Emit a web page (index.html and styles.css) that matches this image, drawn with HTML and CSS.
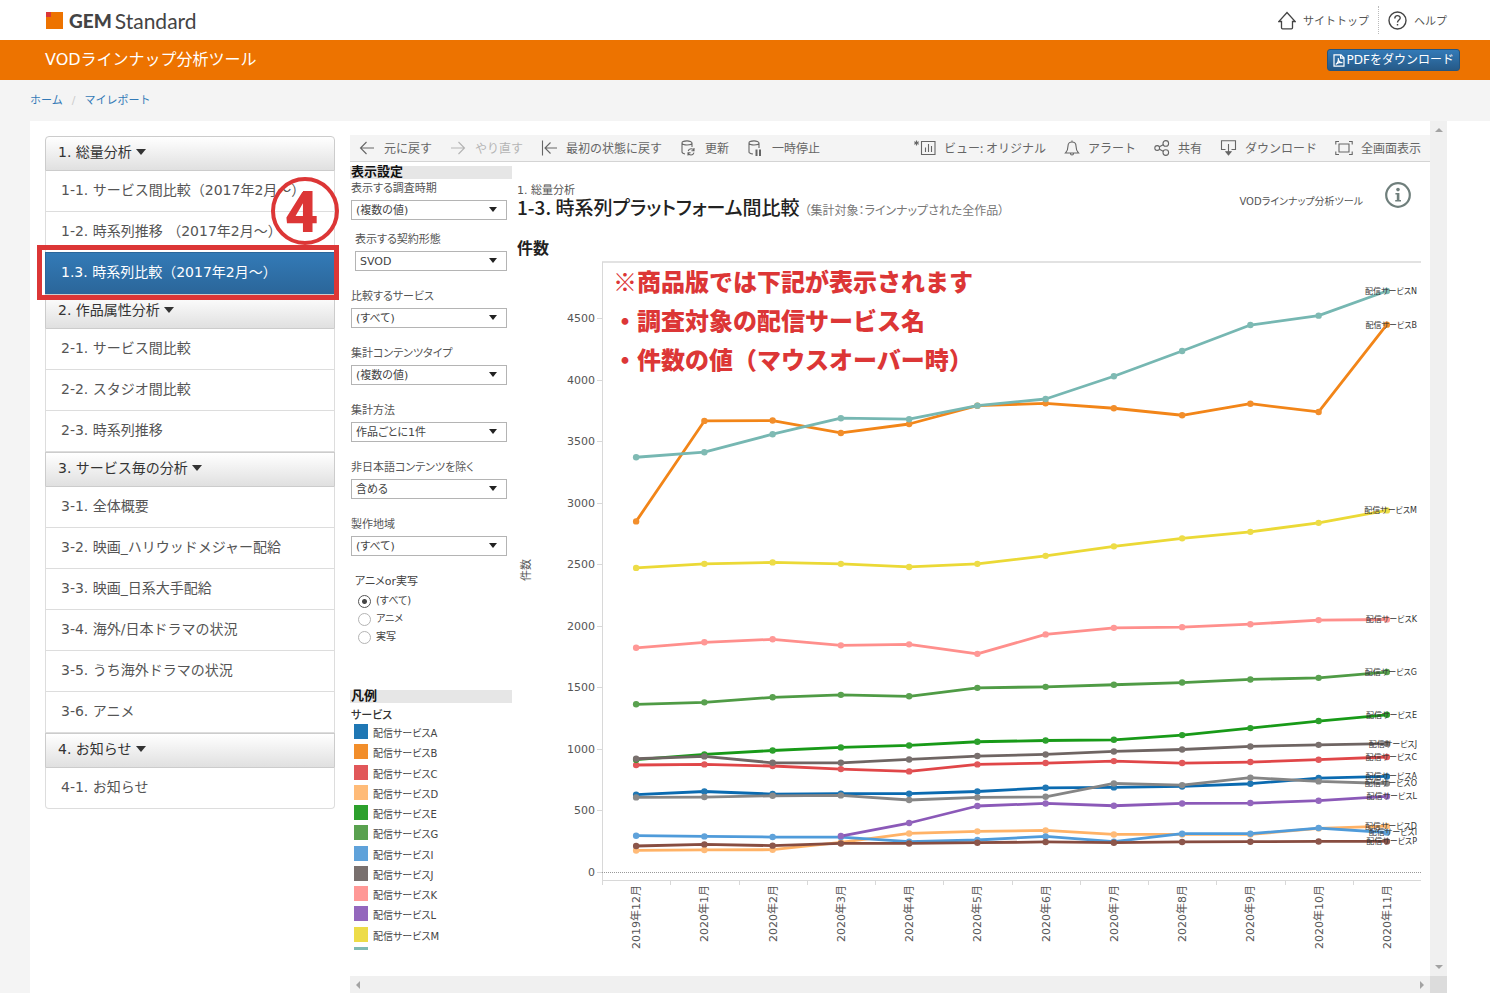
FILE: index.html
```html
<!DOCTYPE html>
<html lang="ja">
<head>
    <meta charset="UTF-8">
    <meta name="viewport" content="width=device-width, initial-scale=1.0">
    <title>VODラインナップ分析ツール</title>
    <link rel="stylesheet" href="styles.css">
</head>
<body>

    <div class="header">
        <a class="logo" href="#">
            <svg width="17" height="17" viewBox="0 0 17 17"><rect width="17" height="17" fill="#ed7300"/><rect width="5" height="5" fill="#dc3636"/></svg>
            <strong>GEM</strong><span>Standard</span>
        </a>
        <div class="header-links">
            <a href="#">
                <svg width="18" height="19" viewBox="0 0 18 19" fill="none" stroke="#444" stroke-width="1.3"><path d="M3.5 10.5 H0.8 L9 1.5 L17.2 10.5 H14.5 V16.8 Q14.5 17.8 13.5 17.8 H4.5 Q3.5 17.8 3.5 16.8 Z"/></svg>
                サイトトップ
            </a>
            <a href="#">
                <svg width="19" height="19" viewBox="0 0 19 19" fill="none" stroke="#444" stroke-width="1.4"><circle cx="9.5" cy="9.5" r="8.5"/><path d="M6.8 7.4 C6.8 3.8 12.2 3.8 12.2 7 C12.2 9.2 9.5 9 9.5 11.6 M9.5 13 V14.6"/></svg>
                ヘルプ
            </a>
        </div>
    </div>

    <div class="titlebar">
        <h1>VODラインナップ分析ツール</h1>
        <button class="btn-pdf" type="button">
            <svg width="12" height="13" viewBox="0 0 12 13" fill="none" stroke="#fff" stroke-width="1.2"><path d="M1 0.8 H8 L11 3.8 V12.2 H1 Z M7.6 1 V4.2 H11"/><path d="M2.8 10.4 C5 8.8 5.8 6.5 5.2 4.2 C5.6 7.4 7 8.8 9.4 8.6 C7 8 4.6 8.8 2.8 10.4"/></svg>
            PDFをダウンロード
        </button>
    </div>

    <div class="breadcrumb">
        <a href="#">ホーム</a><span>/</span><a href="#">マイレポート</a>
    </div>

    <div class="main">
        <div class="sidebar">
            <div class="menu-group">
                <a class="menu-title" href="#">1. 総量分析 <i class="caret"></i></a>
                <a class="menu-item" href="#">1-1. サービス間比較（2017年2月～）</a>
                <a class="menu-item" href="#">1-2. 時系列推移 （2017年2月～）</a>
                <a class="menu-item active" href="#">1.3. 時系列比較（2017年2月～）</a>
                <div class="step-box"></div>
                <div class="step-number">4</div>
            </div>
            <div class="menu-group">
                <a class="menu-title" href="#">2. 作品属性分析 <i class="caret"></i></a>
                <a class="menu-item" href="#">2-1. サービス間比較</a>
                <a class="menu-item" href="#">2-2. スタジオ間比較</a>
                <a class="menu-item" href="#">2-3. 時系列推移</a>
            </div>
            <div class="menu-group">
                <a class="menu-title" href="#">3. サービス毎の分析 <i class="caret"></i></a>
                <a class="menu-item" href="#">3-1. 全体概要</a>
                <a class="menu-item" href="#">3-2. 映画_ハリウッドメジャー配給</a>
                <a class="menu-item" href="#">3-3. 映画_日系大手配給</a>
                <a class="menu-item" href="#">3-4. 海外/日本ドラマの状況</a>
                <a class="menu-item" href="#">3-5. うち海外ドラマの状況</a>
                <a class="menu-item" href="#">3-6. アニメ</a>
            </div>
            <div class="menu-group">
                <a class="menu-title" href="#">4. お知らせ <i class="caret"></i></a>
                <a class="menu-item" href="#">4-1. お知らせ</a>
            </div>
        </div>

        <div class="frame">
            <div class="report">
                <div class="toolbar">
                    <div class="tools">
                        <button type="button"><svg width="16" height="16" viewBox="0 0 16 16"><path d="M15 8 H1.5 M7.5 2 L1.5 8 L7.5 14"/></svg>元に戻す</button>
                        <button type="button" disabled><svg width="16" height="16" viewBox="0 0 16 16"><path d="M1 8 H14.5 M8.5 2 L14.5 8 L8.5 14"/></svg>やり直す</button>
                        <button type="button"><svg width="16" height="16" viewBox="0 0 16 16"><path d="M1.5 0.5 V15.5 M16 8 H4 M9.5 2.5 L4 8 L9.5 13.5"/></svg>最初の状態に戻す</button>
                        <button type="button"><svg width="16" height="16" viewBox="0 0 16 16"><path d="M5 14 C3 13.6 2 13 2 12 V3 C2 0.2 12 0.2 12 3 C12 5.6 2 5.6 2 3 M12 3 V7"/><path d="M8.2 11 C9 8 13 8 13.8 10.5 M14 8 V10.8 H11.4 M14 12.6 C13 15.8 9 15.6 8.2 13 M8 15.6 V12.8 H10.6"/></svg>更新</button>
                        <button type="button"><svg width="16" height="16" viewBox="0 0 16 16"><path d="M6 14 C3 13.6 2 13 2 12 V3 C2 0.2 12 0.2 12 3 C12 5.6 2 5.6 2 3 M12 3 V8"/><path d="M9.5 9.5 V16 M13 9.5 V16" stroke-width="2"/></svg>一時停止</button>
                    </div>
                    <div class="tools">
                        <button type="button"><svg width="22" height="16" viewBox="0 0 22 16"><path d="M7.5 1.5 H21 V14.5 H7.5 Z M11.5 12 V7.5 M14.5 12 V4 M17.5 12 V6"/><path d="M2.5 0.5 V5.5 M0.3 1.8 L4.7 4.2 M4.7 1.8 L0.3 4.2"/></svg>ビュー: オリジナル</button>
                        <button type="button"><svg width="16" height="16" viewBox="0 0 16 16"><path d="M1.5 13 C3.5 11 4 9 4 6 C4 3 6 2 8 2 C10 2 12 3 12 6 C12 9 12.5 11 14.5 13 Z M8 0.5 V2 M6.5 13.5 C6.5 15.5 9.5 15.5 9.5 13.5"/></svg>アラート</button>
                        <button type="button"><svg width="16" height="16" viewBox="0 0 16 16"><circle cx="3.2" cy="8" r="2.4"/><circle cx="11.8" cy="3.4" r="2.8"/><circle cx="11.8" cy="12.6" r="2.8"/><path d="M5.4 6.8 L9.2 4.8 M5.4 9.2 L9.2 11.2"/></svg>共有</button>
                        <button type="button"><svg width="17" height="16" viewBox="0 0 17 16"><path d="M5.5 9.5 H1.5 V0.8 H15.5 V9.5 H11.5 M8.5 4 V14.5"/><path d="M6 11.8 L8.5 14.8 L11 11.8 Z" fill="#666"/></svg>ダウンロード</button>
                        <button type="button"><svg width="18" height="16" viewBox="0 0 18 16"><path d="M4 4 H14 V12 H4 Z M0.8 4.5 V1.5 H4 M14 1.5 H17.2 V4.5 M17.2 11.5 V14.5 H14 M4 14.5 H0.8 V11.5"/></svg>全画面表示</button>
                    </div>
                </div>

                <div class="dashboard">
                    <div class="filters">
                        <h2>表示設定</h2>
                        <div class="field first">
                            <label for="period">表示する調査時期</label>
                            <div class="select"><select id="period"><option>(複数の値)</option></select></div>
                        </div>
                        <div class="field indent">
                            <label for="contract">表示する契約形態</label>
                            <div class="select"><select id="contract"><option>SVOD</option></select></div>
                        </div>
                        <div class="field">
                            <label for="service">比較するサービス</label>
                            <div class="select"><select id="service"><option>(すべて)</option></select></div>
                        </div>
                        <div class="field">
                            <label for="content">集計コンテンツタイプ</label>
                            <div class="select"><select id="content"><option>(複数の値)</option></select></div>
                        </div>
                        <div class="field">
                            <label for="method">集計方法</label>
                            <div class="select"><select id="method"><option>作品ごとに1件</option></select></div>
                        </div>
                        <div class="field">
                            <label for="foreign">非日本語コンテンツを除く</label>
                            <div class="select"><select id="foreign"><option>含める</option></select></div>
                        </div>
                        <div class="field">
                            <label for="region">製作地域</label>
                            <div class="select"><select id="region"><option>(すべて)</option></select></div>
                        </div>
                        <div class="radios" role="radiogroup" aria-labelledby="kind">
                            <div id="kind">アニメor実写</div>
                            <label><input type="radio" name="kind" checked>(すべて)</label>
                            <label><input type="radio" name="kind">アニメ</label>
                            <label><input type="radio" name="kind">実写</label>
                        </div>

                        <h2>凡例</h2>
                        <h3>サービス</h3>
                        <div class="legend">
                            <!-- filled by chart.js -->
                            <ul id="legend"></ul>
                        </div>
                    </div>

                    <div class="content">
                        <div class="content-header">
                            <div class="content-title">
                                <p>1. 総量分析</p>
                                <h2>1-3. 時系列プラットフォーム間比較<small>（集計対象：ラインナップされた全作品）</small></h2>
                            </div>
                            <div class="content-info">
                                <span>VODラインナップ分析ツール</span>
                                <svg width="26" height="26" viewBox="0 0 26 26"><circle cx="13" cy="13" r="11.8" fill="none" stroke="#6f7f7c" stroke-width="2.2"/><circle cx="13" cy="7.6" r="1.8" fill="#6f7f7c"/><path d="M10.4 11 H14.4 V18 H16 V19.4 H10.2 V18 H11.8 V12.4 H10.4 Z" fill="#6f7f7c"/></svg>
                            </div>
                        </div>
                        <h3>件数</h3>
                        <div class="chart">
                            <svg id="chart"></svg>
                            <div class="note">
                                <p>※商品版では下記が表示されます</p>
                                <p>・調査対象の配信サービス名</p>
                                <p>・件数の値（マウスオーバー時）</p>
                            </div>
                        </div>
                    </div>
                </div>
            </div>
            <div class="scroll-v"><i class="up"></i><i class="down"></i></div>
            <div class="scroll-h"><i class="left"></i><i class="right"></i></div>
            <div class="scroll-corner"></div>
        </div>
    </div>

    <script src="chart.js"></script>
</body>
</html>
```

FILE: styles.css
```css
* {
    box-sizing: border-box;
}
body {
    font-family: "DejaVu Sans", "Noto Sans CJK JP", sans-serif;
    font-size: 14px;
    margin: 0;
    background-color: #f4f4f4;
    color: #333;
}
h1, h2, h3, p, ul {
    margin: 0;
    padding: 0;
}
a {
    text-decoration: none;
}
svg {
    display: block;
    flex: none;
}

/* header */
.header {
    display: flex;
    justify-content: space-between;
    align-items: center;
    height: 40px;
    padding: 0 43px 0 46px;
    background: #fff;
}
.logo {
    display: flex;
    align-items: center;
    color: #444;
    font-family: Lato, sans-serif;
    font-size: 21px;
    line-height: 24px;
}
.logo strong {
    margin: 2px 3px 0 6px;
    font-size: 19px;
    font-weight: 900;
}
.logo span {
    margin-top: 2px;
    font-weight: 400;
}
.header-links {
    display: flex;
    align-items: center;
    height: 28px;
}
.header-links a {
    display: flex;
    align-items: center;
    gap: 7px;
    height: 28px;
    color: #555;
    font-size: 11px;
}
.header-links a + a {
    margin-left: 9px;
    padding-left: 9px;
    border-left: 1px dotted #bbb;
}
.titlebar {
    display: flex;
    justify-content: space-between;
    align-items: center;
    height: 40px;
    padding: 0 30px 0 45px;
    background: #ed7300;
}
.titlebar h1 {
    color: #fff;
    font-size: 16px;
    font-weight: normal;
    line-height: 38px;
}
.btn-pdf {
    display: flex;
    align-items: center;
    gap: 2px;
    height: 22px;
    padding: 0 5px;
    border: 1px solid #245580;
    border-radius: 3px;
    background: linear-gradient(#337ab7, #265a88);
    color: #fff;
    font-family: inherit;
    font-size: 12px;
    line-height: 18px;
}
.breadcrumb {
    padding: 1px 30px 0;
    color: #ccc;
    font-size: 11px;
    line-height: 40px;
}
.breadcrumb a {
    color: #337ab7;
}
.breadcrumb span {
    padding: 0 9px;
}

/* layout */
.main {
    display: flex;
    align-items: stretch;
    gap: 15px;
    margin-left: 30px;
    padding: 0 43px 0 15px;
    background: #fff;
}
.sidebar {
    flex: none;
    width: 290px;
    padding-top: 15px;
}
.menu-group {
    position: relative;
}
.menu-title {
    display: block;
    height: 35px;
    padding: 0 12px;
    border: 1px solid #ccc;
    border-radius: 4px 4px 0 0;
    background: linear-gradient(#fff, #e0e0e0);
    color: #333;
    line-height: 30px;
}
.menu-group + .menu-group .menu-title {
    border-radius: 0;
}
.caret {
    display: inline-block;
    border: 5px solid transparent;
    border-top: 6px solid #333;
    border-bottom: 0;
    vertical-align: 2px;
}
.menu-item {
    display: block;
    height: 42px;
    margin-top: -1px;
    padding: 0 15px;
    border: 1px solid #ddd;
    background: #fff;
    color: #555;
    line-height: 38px;
    white-space: nowrap;
}
.menu-title + .menu-item {
    border-top-color: #ccc;
}
.menu-group:last-child .menu-item:last-child {
    border-radius: 0 0 4px 4px;
}
.menu-item.active {
    border-color: #2b669a;
    background: linear-gradient(#337ab7, #2b669a);
    color: #fff;
}

/* red callout over the active item */
.step-box {
    position: absolute;
    z-index: 1;
    left: -8px;
    right: -4px;
    bottom: -6px;
    height: 55px;
    border: 5px solid #dc3636;
}
.step-number {
    position: absolute;
    z-index: 1;
    right: -4px;
    top: 41px;
    width: 68px;
    height: 68px;
    padding-right: 7px;
    border: 4px solid #dc3636;
    border-radius: 50%;
    color: #dc3636;
    font-family: Roboto, sans-serif;
    font-size: 58px;
    font-weight: 900;
    line-height: 62px;
    text-align: center;
}

/* embedded report */
.frame {
    flex: 1;
    display: grid;
    grid-template-columns: 1fr 17px;
    grid-template-rows: 1fr 17px;
    min-width: 0;
}
.report {
    min-width: 0;
    padding: 14px 0 26px;
    overflow: hidden;
    font-feature-settings: "palt";
}
.scroll-v, .scroll-h {
    display: flex;
    justify-content: space-between;
    align-items: center;
    background: #f0f0f0;
}
.scroll-v {
    flex-direction: column;
    padding: 7px 0;
}
.scroll-h {
    padding: 0 6px;
}
.scroll-corner {
    background: #dcdcdc;
}
.scroll-v i, .scroll-h i {
    border: 4px solid transparent;
}
.scroll-v .up {
    border-top: 0;
    border-bottom-color: #a3a3a3;
}
.scroll-v .down {
    border-bottom: 0;
    border-top-color: #a3a3a3;
}
.scroll-h .left {
    border-left: 0;
    border-right-color: #a3a3a3;
}
.scroll-h .right {
    border-right: 0;
    border-left-color: #a3a3a3;
}
.toolbar {
    display: flex;
    justify-content: space-between;
    height: 27px;
    padding: 0 9px;
    border-bottom: 1px solid #d4d4d4;
    background: #f4f4f4;
    font-feature-settings: normal;
}
.tools {
    display: flex;
    gap: 18px;
}
.toolbar button {
    display: flex;
    align-items: center;
    gap: 8px;
    padding: 0 0 1px;
    border: 0;
    background: none;
    color: #666;
    font-family: "Noto Sans CJK JP", sans-serif;
    font-size: 12px;
    white-space: nowrap;
}
.tools:first-child button {
    gap: 9px;
}
.toolbar svg {
    fill: none;
    stroke: #666;
    stroke-width: 1.1;
}
.toolbar button:disabled {
    color: #b4b4b4;
}
.toolbar button:disabled svg {
    stroke: #b4b4b4;
}
.dashboard {
    display: flex;
    gap: 5px;
    padding: 0 9px 0 0;
}

/* filters */
.filters {
    flex: none;
    width: 162px;
    padding-top: 4px;
    font-size: 11px;
}
.filters h2 {
    height: 13px;
    padding-left: 1px;
    background: #e6e6e6;
    color: #111;
    font-size: 13px;
    line-height: 12px;
}
.filters h3 {
    margin: 5px 0 0 1px;
    font-size: 11px;
    font-weight: 500;
    line-height: 16px;
}
.field {
    margin: 17px 5px 0 1px;
}
.field.first {
    margin-top: 1px;
}
.field.indent {
    margin-top: 11px;
    padding-left: 4px;
}
.field label {
    display: block;
    height: 20px;
    color: #555;
    line-height: 18px;
    white-space: nowrap;
}
.select {
    position: relative;
}
.select::after {
    content: "";
    position: absolute;
    right: 10px;
    top: 7px;
    border: 4px solid transparent;
    border-top: 5px solid #222;
    border-bottom: 0;
    pointer-events: none;
}
.select select {
    display: block;
    width: 100%;
    height: 20px;
    padding: 0 4px;
    border: 1px solid #b4b4b4;
    border-radius: 0;
    background: #fff;
    color: #444;
    font: inherit;
    font-feature-settings: inherit;
    appearance: none;
}
.radios {
    margin: 17px 0 44px 5px;
    color: #444;
    line-height: 18px;
}
.radios div {
    margin-bottom: 1px;
}
.radios label {
    display: flex;
    align-items: center;
    gap: 5px;
    padding-left: 3px;
    font-size: 10px;
}
.radios input {
    width: 13px;
    height: 13px;
    margin: 0;
    border: 1px solid #b4b4b4;
    border-radius: 50%;
    background: #fff;
    appearance: none;
}
.radios input:checked {
    border-color: #555;
    background: radial-gradient(#444 2px, #fff 3px);
}
.legend {
    height: 226px;
    overflow: hidden;
}
.legend ul {
    display: grid;
    grid-template-rows: repeat(12, 1fr);
    height: 243px;
    margin-left: 4px;
    list-style: none;
}
.legend li {
    display: flex;
    gap: 5px;
    color: #444;
    font-size: 10px;
    line-height: 20px;
}
.legend i {
    width: 14px;
    height: 15px;
}

/* chart area */
.content {
    flex: 1;
    min-width: 0;
    color: #222;
}
.content-header {
    display: flex;
    justify-content: space-between;
    align-items: flex-start;
    height: 54px;
    padding-top: 20px;
}
.content-title {
    padding-top: 2px;
    white-space: nowrap;
}
.content-title p {
    color: #555;
    font-size: 11px;
    line-height: 14px;
}
.content-title h2 {
    font-family: "Noto Sans CJK JP", sans-serif;
    font-size: 19px;
    font-weight: 500;
    line-height: 18px;
}
.content-title small {
    margin-left: 5px;
    color: #777;
    font-size: 12px;
    font-weight: normal;
    line-height: 12px;
}
.content-info {
    display: flex;
    align-items: flex-end;
    gap: 22px;
    padding-right: 10px;
    color: #555;
    font-size: 10px;
    line-height: 12px;
}
.content h3 {
    margin-top: 23px;
    font-size: 16px;
    line-height: 20px;
}
.chart {
    position: relative;
}
.chart > svg {
    width: 100%;
    height: 691px;
}
.chart text {
    fill: #555;
    font-size: 11px;
    font-feature-settings: normal;
}
.chart .point-label {
    fill: #333;
    font-size: 8px;
    font-feature-settings: "palt";
}
.grid-line {
    stroke: #d8d8d8;
}
.top-line {
    stroke: #e2e2e2;
    stroke-width: 2;
}
.zero-line {
    stroke: #999;
    stroke-dasharray: 1 1;
}
.note {
    position: absolute;
    left: 96px;
    top: 2px;
    color: #dc3636;
    font-family: "Noto Sans CJK JP", sans-serif;
    font-feature-settings: normal;
    font-size: 24px;
    font-weight: 900;
    line-height: 39px;
    white-space: nowrap;
}
```

FILE: chart.js
```js
const months = ["2019年12月", "2020年1月", "2020年2月", "2020年3月", "2020年4月", "2020年5月", "2020年6月", "2020年7月", "2020年8月", "2020年9月", "2020年10月", "2020年11月"];

const services = [
    { name: "A", color: "#1f77b4", line: "#0a6ab0", data: [628, 654, 633, 636, 636, 654, 684, 687, 695, 717, 763, 776] },
    { name: "B", color: "#f28e2b", line: "#f28518", data: [2848, 3664, 3667, 3566, 3639, 3788, 3807, 3767, 3710, 3804, 3737, 4446] },
    { name: "C", color: "#e15759", line: "#e04648", data: [869, 874, 861, 836, 817, 874, 885, 901, 885, 893, 912, 934] },
    { name: "D", color: "#ffbb78", line: "#ffb266", data: [175, 179, 181, 240, 313, 330, 338, 305, 305, 305, 354, 373] },
    { name: "E", color: "#2ca02c", line: "#189a18", data: [912, 955, 987, 1012, 1028, 1058, 1068, 1074, 1112, 1169, 1226, 1277] },
    { name: "G", color: "#59a14f", line: "#4f9b45", data: [1362, 1378, 1419, 1439, 1427, 1496, 1504, 1521, 1539, 1564, 1577, 1624] },
    { name: "I", color: "#5fa2da", line: "#4f9bda", data: [295, 289, 284, 284, 246, 260, 289, 246, 311, 311, 357, 321] },
    { name: "J", color: "#79706e", line: "#6f6563", data: [920, 939, 887, 887, 914, 942, 955, 979, 995, 1020, 1033, 1042] },
    { name: "K", color: "#ff9896", line: "#ff8f8c", data: [1821, 1866, 1890, 1841, 1849, 1772, 1930, 1983, 1989, 2013, 2046, 2051] },
    { name: "L", color: "#9467bd", line: "#8b59b8", data: [null, null, null, 292, 398, 536, 557, 538, 557, 560, 579, 614] },
    { name: "M", color: "#eddc48", line: "#ebd936", data: [2470, 2503, 2515, 2503, 2478, 2503, 2568, 2645, 2710, 2763, 2836, 2937] },
    { name: "N", color: "#7fbab3", line: "#76b7b2", data: [3369, 3410, 3556, 3686, 3678, 3788, 3842, 4027, 4232, 4443, 4519, 4719] },
    { name: "O", color: "#8a8a8a", line: "#858585", data: [606, 609, 619, 622, 585, 606, 611, 719, 706, 766, 736, 719] },
    { name: "P", color: "#8c564b", line: "#874c40", data: [211, 224, 214, 232, 232, 238, 244, 238, 244, 246, 248, 248] }
];

const chart = document.getElementById("chart");
const legend = document.getElementById("legend");

function add(tag, attrs, text) {
    const el = document.createElementNS("http://www.w3.org/2000/svg", tag);
    for (const key in attrs) {
        el.setAttribute(key, attrs[key]);
    }
    if (text) {
        el.textContent = text;
    }
    chart.appendChild(el);
}

function drawChart() {
    const left = 85;
    const right = chart.clientWidth;
    const top = 3;
    const bottom = 622;
    const zero = 613;
    const step = (right - left) / months.length;
    const x = i => left + step * (i + 0.5);
    const y = v => zero - v * 554 / 4500;

    chart.innerHTML = "";

    // Frame and zero line
    add("line", { class: "top-line", x1: left, y1: top, x2: right, y2: top });
    add("line", { class: "grid-line", x1: left + 0.5, y1: top, x2: left + 0.5, y2: bottom + 4 });
    add("line", { class: "grid-line", x1: left, y1: bottom - 0.5, x2: right, y2: bottom - 0.5 });
    add("line", { class: "zero-line", x1: left, y1: zero + 0.5, x2: right, y2: zero + 0.5 });

    // Value axis
    for (let v = 0; v <= 4500; v += 500) {
        const ty = Math.round(y(v));
        add("line", { class: "grid-line", x1: left - 5, y1: ty + 0.5, x2: left, y2: ty + 0.5 });
        add("text", { x: left - 7, y: ty + 4, "text-anchor": "end" }, String(v));
    }
    add("text", { transform: "translate(13 311) rotate(-90)", "text-anchor": "middle" }, "件数");

    // Month axis
    months.forEach((month, i) => {
        const tx = Math.round(left + step * i) + 0.5;
        add("line", { class: "grid-line", x1: tx, y1: bottom, x2: tx, y2: bottom + 4 });
        add("text", { transform: `translate(${Math.round(x(i)) + 4} 626) rotate(-90)`, "text-anchor": "end" }, month);
    });

    // Series
    services.forEach(s => {
        const points = s.data.map((v, i) => v === null ? null : [x(i), y(v)]).filter(Boolean);
        add("polyline", { points: points.join(" "), fill: "none", stroke: s.line, "stroke-width": 2.8, "stroke-linejoin": "round" });
        points.forEach(p => add("circle", { cx: p[0], cy: p[1], r: 3.2, fill: s.color }));
    });
    services.forEach(s => {
        add("text", { class: "point-label", x: right - 4, y: y(s.data[11]) + 3, "text-anchor": "end" }, "配信サービス" + s.name);
    });
}

// The last row is cut by the legend's edge, so it only has its swatch
services.slice(0, 12).forEach((s, i) => {
    const li = document.createElement("li");
    const box = document.createElement("i");
    box.style.background = s.color;
    li.append(box, i < 11 ? "配信サービス" + s.name : "");
    legend.appendChild(li);
});

drawChart();
window.addEventListener("resize", drawChart);
```
